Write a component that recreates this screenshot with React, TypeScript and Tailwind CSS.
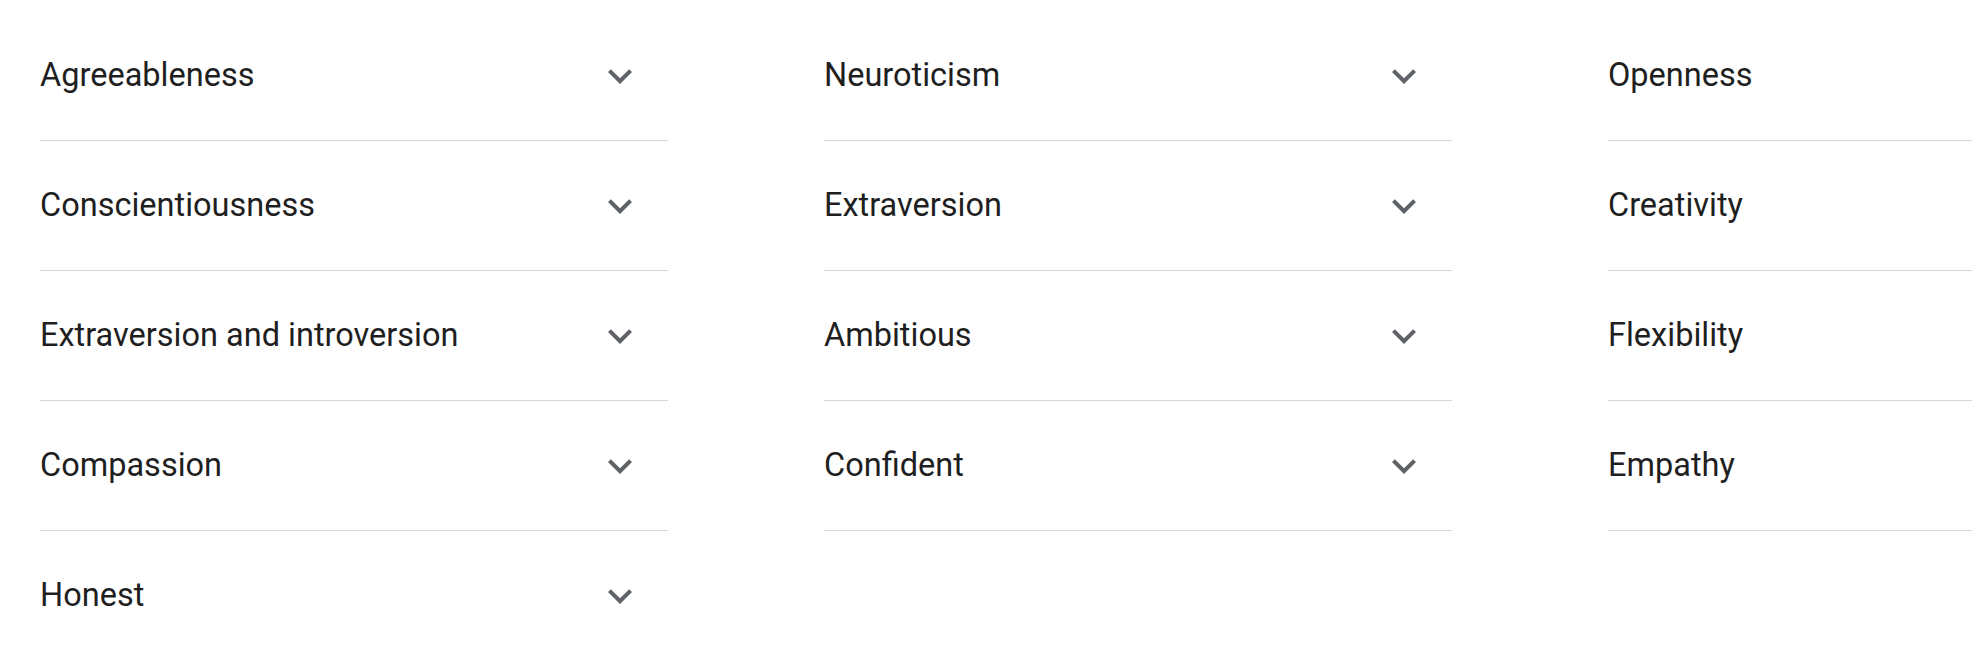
import React from 'react';

const columns: string[][] = [
  ['Agreeableness', 'Conscientiousness', 'Extraversion and introversion', 'Compassion', 'Honest'],
  ['Neuroticism', 'Extraversion', 'Ambitious', 'Confident'],
  ['Openness', 'Creativity', 'Flexibility', 'Empathy'],
];

function ExpandMore() {
  return (
    <svg className="w-12 h-12 shrink-0 text-[#5f6368]" viewBox="0 0 24 24" fill="currentColor" aria-hidden="true">
      <path d="M16.59 8.59L12 13.17 7.41 8.59 6 10l6 6 6-6z" />
    </svg>
  );
}

function TraitRow({ label }: { label: string }) {
  return (
    <button
      type="button"
      className="flex h-[130px] w-full items-center justify-between border-b border-[#d3d5d8] pr-6 text-left"
    >
      <span className="mb-[2px] text-[32.5px] leading-[40px] text-[#1f1f1f]">{label}</span>
      <ExpandMore />
    </button>
  );
}

export default function App() {
  return (
    <div
      className="h-[652px] w-[1972px] overflow-hidden bg-white"
      style={{ fontFamily: 'Roboto, "Liberation Sans", Arial, sans-serif' }}
    >
      <div className="grid w-max grid-cols-[628px_628px_628px] gap-x-[156px] pl-10 pt-[11px]">
        {columns.map((col, i) => (
          <div key={i} className="flex flex-col">
            {col.map((label) => (
              <TraitRow key={label} label={label} />
            ))}
          </div>
        ))}
      </div>
    </div>
  );
}
